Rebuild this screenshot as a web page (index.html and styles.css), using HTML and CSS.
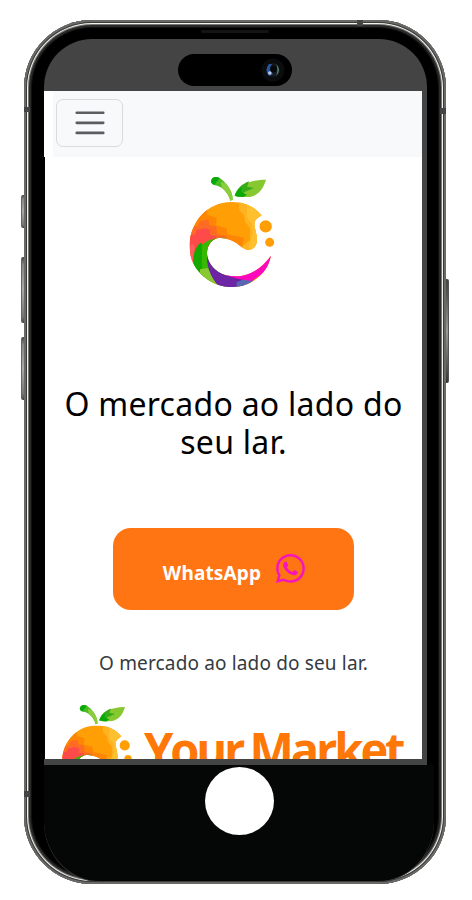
FILE: index.html
```html
<!DOCTYPE html>
<html lang="pt-BR">
<head>
<meta charset="utf-8">
<meta name="viewport" content="width=device-width, initial-scale=1">
<title>Your Market</title>
<link rel="stylesheet" href="styles.css">
</head>
<body>
<svg class="defs" aria-hidden="true">
  <defs>
    <clipPath id="body"><path d="M275 151C263 158 253 165 253 178C255 195 263 214 260 232C257 249 244 257 230 254C216 250 210 241 195 232C178 221 158 216 140 220C122 226 112 244 111 264C112 295 137 323 167 331C193 336 215 335 235 327C265 316 285 296 303 272C296 314 261 349 222 361C151 382 79 336 63 276C46 207 85 132 154 115C203 104 248 118 275 151Z"/></clipPath>
    <symbol id="fruit" viewBox="0 0 390 405">
      <g clip-path="url(#body)">
        <path fill="#ff9e05" d="M40 90H320V380H40Z"/>
        <path fill="#ff8505" d="M40 100H112V150L140 158L138 181L169 190L173 208L222 219L215 250L40 260Z"/>
        <path fill="#ffb321" d="M206 105L208 136L222 151L225 170L240 190V224L218 243L228 265H270V100Z"/>
        <path fill="#ffc02f" d="M231 100V157L246 178L249 204L237 245V265H290V100Z"/>
        <path fill="#ff6a25" d="M50 185L82 184L90 168L115 164L118 181L138 184L142 208L170 213V235L50 250Z"/>
        <path fill="#ff4a4a" d="M50 207L74 209L80 195L105 190L120 194L119 211L139 213V230L70 300L50 300Z"/>
        <path fill="#ff5d5d" d="M50 251L69 237L74 245L65 310H50Z"/>
        <path fill="#39b801" d="M151 218C104 221 73 250 70 293L85 345L165 380V218Z"/>
        <path fill="#14a900" d="M91 233C72 248 66 278 72 310L96 337V236Z"/>
        <path fill="#88c832" d="M90 313L112 309L132 333L166 360V380L90 350Z"/>
        <path fill="#64209f" d="M111 270C126 318 164 335 206 336L230 346L220 375L160 380C139 356 109 324 111 270Z"/>
        <path fill="#7629ab" d="M113 290L142 319L184 331L204 351L197 370L155 370L125 330Z" opacity=".5"/>
        <path fill="#5967b3" d="M200 351L229 340L258 338L230 365L199 370Z"/>
        <path fill="#ff08bd" d="M165 330C223 337 266 313 305 269L290 318L245 348L205 342Z"/>
      </g>
      <path fill="#4abb20" d="M123 49C125 36 137 33 149 39C167 51 188 76 188 104L181 107C175 84 160 68 142 62C131 61 124 58 123 49Z"/>
      <path fill="#08a90a" d="M123 49C125 36 137 33 149 39L142 48L133 60C127 58 124 55 123 49Z"/>
      <path fill="#8ccd3b" d="M152 50L166 55C182 72 188 88 188 104L181 107C177 91 169 79 156 69Z"/>
      <path fill="#87c830" d="M194 92C202 65 228 45 288 44C280 72 263 96 231 96C217 96 205 97 194 92Z"/>
      <path fill="#35ad18" d="M194 92C201 71 216 57 237 49L231 65L252 69L222 82V96C210 97 201 95 194 92Z"/>
      <path fill="#08a90a" d="M194 92L204 75L216 66L213 81L231 89L220 96Z"/>
      <circle fill="#ff9e05" cx="287" cy="184" r="18.5"/>
      <circle fill="#ff9e05" cx="299" cy="232" r="13.5"/>
    </symbol>
  </defs>
</svg>
<div class="phone">
  <i class="key key-a"></i><i class="key key-b"></i><i class="key key-c"></i><i class="key key-d"></i>
  <i class="band band-a"></i><i class="band band-b"></i><i class="band band-c"></i><i class="band band-d"></i>
  <i class="speaker"></i>
  <header class="status">
    <div class="island">
      <svg class="camera" viewBox="0 0 24 24">
        <circle cx="12" cy="12" r="11.5" fill="#0b0c0e"/>
        <circle cx="12" cy="12" r="6.8" fill="#171b20"/>
        <path d="M8 6Q3 12 8 18L12 16Q7 12 11 6Z" fill="#2357a0"/>
        <path d="M15 6Q21 12 15 18Q18 12 15 6Z" fill="#5d8f72"/>
        <circle cx="12.5" cy="11" r="3.4" fill="#07080a"/>
        <circle cx="8.8" cy="15" r="1.8" fill="#b9c6ea"/>
      </svg>
    </div>
  </header>
  <div class="frame">
    <main class="page">
      <nav class="navbar">
        <button class="toggler" aria-label="Menu">
          <svg viewBox="0 0 30 30"><path stroke="#5a5d60" stroke-linecap="round" stroke-width="2" d="M4.5 6.9h21M4.5 14.9h21M4.5 22.8h21"/></svg>
        </button>
      </nav>
      <svg class="logo"><use href="#fruit"/></svg>
      <h1>O mercado ao lado do<br>seu lar.</h1>
      <a class="cta"><span>WhatsApp</span>
        <svg viewBox="0 0 16 16" fill="#f614bd"><path d="M13.601 2.326A7.85 7.85 0 0 0 7.994 0C3.627 0 .068 3.558.064 7.926c0 1.399.366 2.76 1.057 3.965L0 16l4.204-1.102a7.9 7.9 0 0 0 3.79.965h.004c4.368 0 7.926-3.558 7.93-7.93A7.9 7.9 0 0 0 13.6 2.326zM7.994 14.521a6.6 6.6 0 0 1-3.356-.92l-.24-.144-2.494.654.666-2.433-.156-.251a6.56 6.56 0 0 1-1.007-3.505c0-3.626 2.957-6.584 6.591-6.584a6.56 6.56 0 0 1 4.66 1.931 6.56 6.56 0 0 1 1.928 4.66c-.004 3.639-2.961 6.592-6.592 6.592m3.615-4.934c-.197-.099-1.17-.578-1.353-.646-.182-.065-.315-.099-.445.099-.133.197-.513.646-.627.775-.114.133-.232.148-.43.05-.197-.1-.836-.308-1.592-.985-.59-.525-.985-1.175-1.103-1.372-.114-.198-.011-.304.088-.403.087-.088.197-.232.296-.346.1-.114.133-.198.198-.33.065-.134.034-.248-.015-.347-.05-.099-.445-1.076-.612-1.47-.16-.389-.323-.335-.445-.34-.114-.007-.247-.007-.38-.007a.73.73 0 0 0-.529.247c-.182.198-.691.677-.691 1.654s.71 1.916.81 2.049c.098.133 1.394 2.132 3.383 2.992.47.205.84.326 1.129.418.475.152.904.129 1.246.08.38-.058 1.171-.48 1.338-.943.164-.464.164-.86.114-.992-.049-.133-.182-.198-.38-.297"/></svg>
      </a>
      <p>O mercado ao lado do seu lar.</p>
      <div class="brand">
        <svg><use href="#fruit"/></svg>
        <strong>Your Market</strong>
      </div>
    </main>
  </div>
  <footer class="chin"><div class="home"></div></footer>
</div>
</body>
</html>
```
FILE: styles.css
```css
* { box-sizing: border-box; }
body { margin: 0; height: 900px; overflow: hidden; background: #fff; font-family: "Noto Sans", "Open Sans", sans-serif; }
.defs { position: absolute; width: 0; height: 0; }

.phone {
  position: relative;
  width: 422px;
  height: 864px;
  margin: 20px 0 0 24px;
  padding: 19px 12px 3px 20px;
  border-radius: 68px;
  background: #000;
  box-shadow: inset 0 0 0 2px #696968, inset 0 0 0 3px #3b3b3a, inset 0 0 0 4px #f3f3ee, inset 0 0 0 5px #777673, inset 0 0 0 7px #292929, inset 0 0 0 8px #111;
}
.key { position: absolute; width: 3px; border-radius: 2px 0 0 2px; background: linear-gradient(#444, #888 12%, #aaa 50%, #777 90%, #444); border-left: 1px solid #666; }
.key-a { left: -3px; top: 175px; height: 33px; }
.key-b { left: -3px; top: 237px; height: 66px; }
.key-c { left: -3px; top: 317px; height: 63px; }
.key-d { left: 422px; top: 259px; height: 104px; border-left: 0; border-right: 1px solid #555; border-radius: 0 2px 2px 0; background: linear-gradient(#444, #555 15%, #999 50%, #555 85%, #333); }
.band { position: absolute; background: #444; }
.band-a { left: 0; top: 87px; width: 6px; height: 5px; }
.band-b { left: 416px; top: 88px; width: 6px; height: 6px; }
.band-c { left: 0; top: 771px; width: 6px; height: 6px; }
.band-d { left: 333px; top: 0; width: 6px; height: 6px; }
.speaker { position: absolute; left: 177px; top: 10px; width: 68px; height: 3px; border-radius: 2px; background: #141414; }

.status {
  width: 383px;
  height: 52px;
  padding: 15px 0 0 134px;
  border-radius: 48px 48px 0 0;
  background: #444;
}
.island { display: flex; align-items: center; justify-content: flex-end; width: 114px; height: 32px; padding-right: 7px; border-radius: 16px; background: #000; }
.camera { width: 24px; height: 24px; }

.frame { width: 383px; height: 674px; padding: 0 5px 6px 0; background: linear-gradient(#000, #000) 0 66px / 1px 602px no-repeat, linear-gradient(#fff, #fff) 0 0 / 1px 66px no-repeat #444; }
.page { display: flex; flex-direction: column; align-items: center; height: 668px; margin-left: 1px; overflow: hidden; background: #fff; }
.navbar { align-self: stretch; flex: none; height: 66px; margin-left: 8px; padding: 8px 3px; background: #f8f9fb; }
.toggler { display: flex; align-items: center; justify-content: center; width: 67px; height: 48px; padding: 0; border: 1px solid #d9dbdd; border-radius: 7px; background: transparent; }
.toggler svg { width: 38px; height: 38px; fill: none; }
.logo { flex: none; width: 130px; height: 135px; margin: 8px 0 0 3px; }
h1 { flex: none; margin: 85px 0 0; color: #000; font-size: 32px; line-height: 38.4px; font-weight: 400; text-align: center; letter-spacing: .27px; white-space: nowrap; }
.cta { display: flex; flex: none; align-items: center; justify-content: center; gap: 15px; width: 241px; height: 82px; margin-top: 66px; padding-left: 1px; border-radius: 18px; background: #ff7514; color: #fff; }
.cta span { padding-top: 8px; font-size: 19px; line-height: 26px; font-weight: 700; letter-spacing: .15px; }
.cta svg { width: 29px; height: 29px; }
p { flex: none; margin: 38px 0 0; color: #343a40; font-size: 19px; line-height: 30px; letter-spacing: .15px; white-space: nowrap; }
.brand { display: flex; flex: none; align-self: stretch; margin-top: 17px; }
.brand svg { flex: none; width: 107px; height: 111px; margin-left: 1px; }
.brand strong { margin: 21px 0 0 -9px; color: #ff7706; font-family: "Open Sans", "Noto Sans", sans-serif; font-size: 48.5px; line-height: 67px; font-weight: 700; letter-spacing: -3.2px; word-spacing: -2px; white-space: nowrap; transform: scaleX(.97); transform-origin: left; }

.chin { display: flex; justify-content: center; width: 390px; height: 116px; padding: 2px 0 0; border-radius: 0 0 56px 56px / 0 0 60px 60px; background: #050706; box-shadow: 0 1px 0 #3b3b3a; }
.home { width: 69px; height: 68px; border-radius: 50%; background: #fff; }
```
